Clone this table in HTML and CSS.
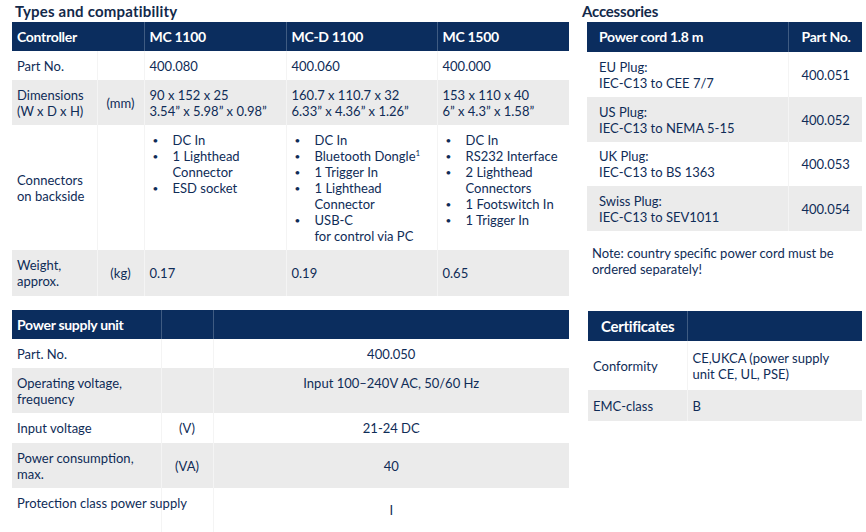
FILE: index.html
```html
<!DOCTYPE html>
<html lang="en">
<head>
<meta charset="utf-8">
<title>Types and compatibility</title>
<link rel="stylesheet" href="styles.css">
</head>
<body>
<div class="page">
  <div class="left">
    <h2 class="title types-title">Types and compatibility</h2>
    <table class="spec types">
      <colgroup>
        <col style="width:85px"><col style="width:47px"><col style="width:142px"><col style="width:151px"><col style="width:132px">
      </colgroup>
      <thead>
        <tr class="h29"><th colspan="2">Controller</th><th>MC 1100</th><th>MC-D 1100</th><th>MC 1500</th></tr>
      </thead>
      <tbody>
        <tr class="h29"><td>Part No.</td><td></td><td>400.080</td><td>400.060</td><td>400.000</td></tr>
        <tr class="grey h45"><td>Dimensions (W x D x H)</td><td class="unit">(mm)</td><td>90 x 152 x 25<br>3.54” x 5.98” x 0.98”</td><td>160.7 x 110.7 x 32<br>6.33” x 4.36” x 1.26”</td><td>153 x 110 x 40<br>6” x 4.3” x 1.58”</td></tr>
        <tr class="h125">
          <td>Connectors on backside</td><td></td>
          <td class="top"><ul class="bullets"><li><span>DC In</span></li><li><span>1 Lighthead<br>Connector</span></li><li><span>ESD socket</span></li></ul></td>
          <td class="top"><ul class="bullets"><li><span>DC In</span></li><li><span>Bluetooth Dongle<sup>1</sup></span></li><li><span>1 Trigger In</span></li><li><span>1 Lighthead<br>Connector</span></li><li><span>USB-C<br>for control via PC</span></li></ul></td>
          <td class="top"><ul class="bullets"><li><span>DC In</span></li><li><span>RS232 Interface</span></li><li><span>2 Lighthead<br>Connectors</span></li><li><span>1 Footswitch In</span></li><li><span>1 Trigger In</span></li></ul></td>
        </tr>
        <tr class="grey h46"><td>Weight, approx.</td><td class="unit">(kg)</td><td>0.17</td><td>0.19</td><td>0.65</td></tr>
      </tbody>
    </table>

    <table class="spec psu">
      <colgroup>
        <col style="width:149px"><col style="width:52px"><col style="width:356px">
      </colgroup>
      <thead>
        <tr class="h29"><th>Power supply unit</th><th></th><th></th></tr>
      </thead>
      <tbody>
        <tr class="h29"><td>Part. No.</td><td></td><td class="val">400.050</td></tr>
        <tr class="grey h45"><td>Operating voltage, frequency</td><td></td><td class="val top">Input 100–240V AC, 50/60 Hz</td></tr>
        <tr class="h30"><td>Input voltage</td><td class="unit">(V)</td><td class="val">21-24 DC</td></tr>
        <tr class="grey h45"><td>Power consumption, max.</td><td class="unit">(VA)</td><td class="val">40</td></tr>
        <tr class="h44"><td class="top nowrap">Protection class power supply</td><td></td><td class="val">I</td></tr>
      </tbody>
    </table>
  </div>

  <div class="right">
    <h2 class="title acc-title">Accessories</h2>
    <table class="spec acc">
      <colgroup><col style="width:201px"><col style="width:74px"></colgroup>
      <thead>
        <tr class="h30"><th>Power cord 1.8 m</th><th>Part No.</th></tr>
      </thead>
      <tbody>
        <tr class="h45"><td>EU Plug:<br>IEC-C13 to CEE 7/7</td><td>400.051</td></tr>
        <tr class="grey h45"><td>US Plug:<br>IEC-C13 to NEMA 5-15</td><td>400.052</td></tr>
        <tr class="h44"><td>UK Plug:<br>IEC-C13 to BS 1363</td><td>400.053</td></tr>
        <tr class="grey h45"><td>Swiss Plug:<br>IEC-C13 to SEV1011</td><td>400.054</td></tr>
      </tbody>
    </table>
    <p class="note">Note: country specific power cord must be ordered separately!</p>

    <table class="spec cert">
      <colgroup><col style="width:99px"><col style="width:175px"></colgroup>
      <thead>
        <tr class="h30"><th>Certificates</th><th></th></tr>
      </thead>
      <tbody>
        <tr class="h49"><td>Conformity</td><td>CE,UKCA (power supply<br>unit CE, UL, PSE)</td></tr>
        <tr class="grey h31"><td>EMC-class</td><td>B</td></tr>
      </tbody>
    </table>
  </div>
</div>
</body>
</html>
```

FILE: styles.css
```css
html, body {
  margin: 0;
  padding: 0;
  background: #ffffff;
}

body {
  font-family: Lato, "Open Sans", sans-serif;
  font-size: 13px;
  line-height: 16px;
  color: #0f2c57;
}

.page {
  display: flex;
  align-items: flex-start;
  width: 866px;
  height: 532px;
  overflow: hidden;
}

.left {
  margin-left: 12px;
  width: 557px;
}

.right {
  margin-left: 6px;
  width: 287px;
}

.title {
  margin: 0;
  padding: 0 0 0 3px;
  height: 22px;
  font-size: 15px;
  line-height: 22px;
  font-weight: 700;
  letter-spacing: -0.2px;
  color: #13294a;
}

.types-title {
  letter-spacing: 0.2px;
}

.acc-title {
  padding-left: 7px;
}

.spec {
  border-collapse: collapse;
  table-layout: fixed;
  border-spacing: 0;
}

.spec th {
  background: #0b2d5e;
  color: #ffffff;
  font-weight: 700;
  font-size: 14px;
  letter-spacing: -0.3px;
  text-align: left;
  padding: 0 5px;
  vertical-align: middle;
  border-left: 1px solid #3f5b82;
}

.spec th:first-child {
  border-left: none;
}

.spec td {
  padding: 0 5px;
  vertical-align: middle;
  text-align: left;
  border-left: 1px solid #f4f4f4;
}

.spec td:first-child {
  border-left: none;
}

.spec tr.grey td {
  background: #ebebeb;
}

.spec td.unit {
  text-align: center;
  padding: 0;
}

.spec td.top {
  vertical-align: top;
  padding-top: 7px;
}

.spec td.val {
  text-align: center;
}

.spec td.nowrap {
  white-space: nowrap;
  overflow: visible;
}

.h29 { height: 29px; }
.h30 { height: 30px; }
.h31 { height: 31px; }
.h44 { height: 44px; }
.h45 { height: 45px; }
.h46 { height: 46px; }
.h49 { height: 49px; }
.h125 { height: 125px; }

.bullets {
  list-style: none;
  margin: 0;
  padding: 0;
}

.bullets li {
  display: grid;
  grid-template-columns: 23px auto;
  white-space: nowrap;
}

.bullets li::before {
  content: "•";
  padding-left: 3px;
  font-size: 10px;
}

.bullets sup {
  font-size: 8px;
  line-height: 0;
  vertical-align: 5px;
}

.types {
  width: 557px;
}

.psu {
  width: 557px;
  margin-top: 14px;
}

.acc {
  width: 275px;
  margin-left: 12px;
}

.acc th,
.acc td {
  padding-left: 12px;
}

.acc th + th,
.acc td + td {
  padding-left: 13px;
}

.note {
  margin: 14px 0 0 17px;
  line-height: 16px;
  width: 262px;
}

.cert {
  width: 274px;
  margin-top: 34px;
  margin-left: 13px;
}

.cert th {
  font-size: 15px;
  padding-left: 13px;
}
```
